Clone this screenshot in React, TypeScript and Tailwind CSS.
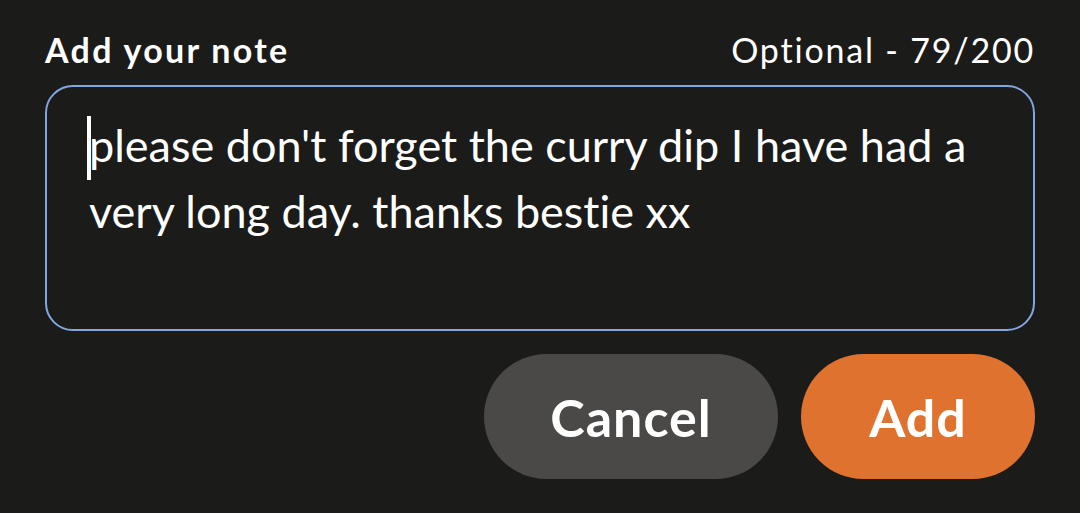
import React from 'react';

const App: React.FC = () => {
  const note = "please don't forget the curry dip I have had a very long day. thanks bestie xx";

  return (
    <div className="w-[1080px] h-[513px] bg-[#1b1b1a] text-white px-[45px] pt-[26px] [font-variant-ligatures:none]" style={{ fontFamily: 'Lato, "Noto Sans", sans-serif' }}>
      <div className="flex items-center justify-between h-[46px]">
        <span className="text-[34px] font-bold tracking-[2.3px]">Add your note</span>
        <span className="text-[34px] font-normal tracking-[1.8px]">Optional - 79/200</span>
      </div>

      <div className="mt-[13px] h-[246px] rounded-[28px] border-[2.5px] border-[#82a6e2] pl-[42px] pr-[40px] pt-[25px]">
        <p className="relative text-[45px] leading-[66px]">
          <span className="absolute left-[-2px] top-[4px] w-[4px] h-[64px] bg-white" />
          {note}
        </p>
      </div>

      <div className="mt-[23px] flex justify-end gap-[23px]">
        <button className="w-[294px] h-[125px] rounded-full bg-[#4a4947] text-[52px] font-bold tracking-[1px]">Cancel</button>
        <button className="w-[234px] h-[125px] rounded-full bg-[#e0722f] text-[52px] font-bold tracking-[1px]">Add</button>
      </div>
    </div>
  );
};

export default App;
